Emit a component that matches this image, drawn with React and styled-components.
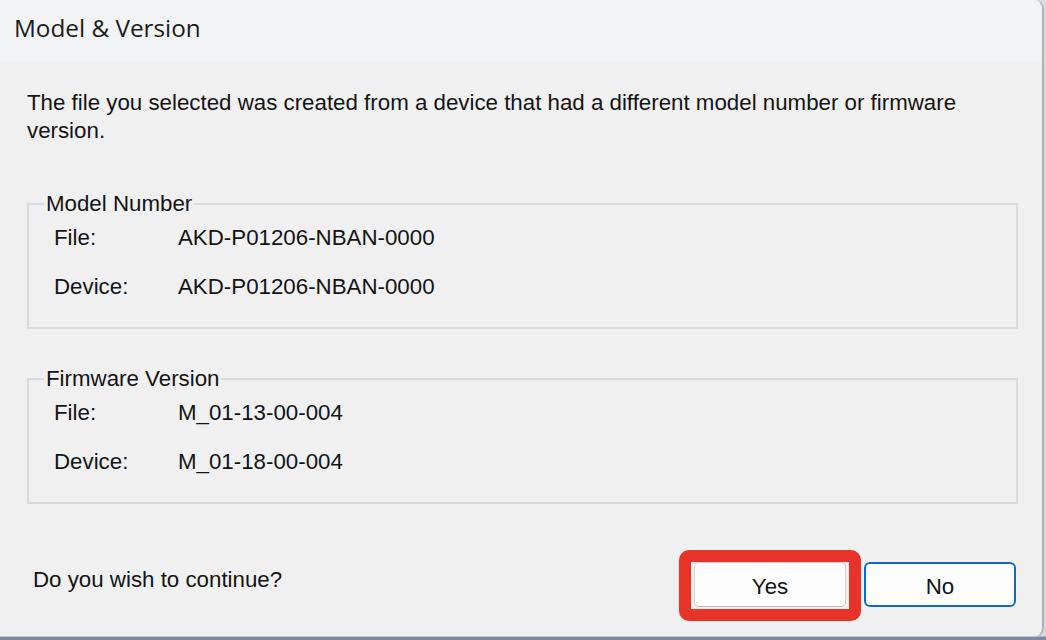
import React from "react";
import styled, { createGlobalStyle } from "styled-components";

const Global = createGlobalStyle`
  html, body { margin: 0; padding: 0; }
  body {
    width: 1046px;
    height: 640px;
    overflow: hidden;
    background: #d9dbe0;
    font-family: "Liberation Sans", Arial, sans-serif;
  }
  #root { width: 1046px; height: 640px; }
`;

const Screen = styled.div`
  width: 1046px;
  height: 640px;
  display: flex;
  flex-direction: column;
  background: linear-gradient(#d9dbe0 0, #d9dbe0 636px, #7d88a2 637px);
`;

const Window = styled.div`
  width: 1042px;
  height: 636px;
  box-sizing: content-box;
  border-right: 2px solid #b2b2b4;
  border-bottom: 1px solid #c4c6cc;
  border-radius: 0 9px 9px 0;
  overflow: hidden;
  display: flex;
  flex-direction: column;
  background: #f0f0f0;
`;

const TitleBar = styled.div`
  height: 62px;
  flex: none;
  display: flex;
  align-items: center;
  padding: 0 0 8px 14px;
  box-sizing: border-box;
  background: #f2f3f5;
  font-family: "Open Sans", "Noto Sans", sans-serif;
  font-size: 24.3px;
  color: #1b1b1b;
`;

const Body = styled.div`
  flex: 1;
  display: flex;
  flex-direction: column;
  padding: 27px 24px 0 27px;
  font-size: 22.3px;
  color: #141414;
`;

const Message = styled.p`
  margin: 0;
  line-height: 28px;
  width: 970px;
`;

const GroupBox = styled.fieldset`
  margin: ${(p) => p.$top}px 0 0 0;
  padding: 12px 0 29px 0;
  border: 2px solid #dadada;
  min-width: 0;
  display: flex;
  flex-direction: column;
  gap: 27px;
`;

const Legend = styled.legend`
  margin-left: 15px;
  padding: 0 2px;
  line-height: 22px;
  color: #141414;
`;

const Row = styled.div`
  display: grid;
  grid-template-columns: 124px 1fr;
  padding-left: 25px;
  line-height: 22px;
`;

const Footer = styled.div`
  margin-top: 58px;
  display: flex;
  align-items: center;
  padding: 0 2px 0 6px;
`;

const Question = styled.span`
  flex: 1;
  line-height: 22px;
  margin-top: -10px;
`;

const Buttons = styled.div`
  display: flex;
  gap: 18px;
`;

const ButtonWrap = styled.div`
  position: relative;
`;

const Button = styled.button`
  width: 152px;
  height: 45px;
  box-sizing: border-box;
  font-family: "Liberation Sans", Arial, sans-serif;
  font-size: 22.3px;
  color: #141414;
  background: #fdfdfd;
  border: ${(p) => (p.$default ? "2px solid #0a6ccc" : "1px solid #d2d2d2")};
  border-bottom-color: ${(p) => (p.$default ? "#0a6ccc" : "#bdbdbd")};
  border-radius: ${(p) => (p.$default ? "6px" : "5px")};
  padding: 4px 0 0;
  display: flex;
  align-items: center;
  justify-content: center;
`;

const Highlight = styled.div`
  position: absolute;
  top: -12px;
  left: -15px;
  right: -15px;
  bottom: -14px;
  border: 12px solid #e7332a;
  border-radius: 10px;
  pointer-events: none;
`;

function Group({ title, top, rows }) {
  return (
    <GroupBox $top={top}>
      <Legend>{title}</Legend>
      {rows.map(([k, v]) => (
        <Row key={k}>
          <span>{k}</span>
          <span>{v}</span>
        </Row>
      ))}
    </GroupBox>
  );
}

export default function App() {
  return (
    <>
      <Global />
      <Screen>
        <Window>
          <TitleBar>Model &amp; Version</TitleBar>
          <Body>
            <Message>
              The file you selected was created from a device that had a different model number or firmware
              version.
            </Message>
            <Group
              title="Model Number"
              top={48}
              rows={[
                ["File:", "AKD-P01206-NBAN-0000"],
                ["Device:", "AKD-P01206-NBAN-0000"],
              ]}
            />
            <Group
              title="Firmware Version"
              top={39}
              rows={[
                ["File:", "M_01-13-00-004"],
                ["Device:", "M_01-18-00-004"],
              ]}
            />
            <Footer>
              <Question>Do you wish to continue?</Question>
              <Buttons>
                <ButtonWrap>
                  <Button>Yes</Button>
                  <Highlight />
                </ButtonWrap>
                <Button $default>No</Button>
              </Buttons>
            </Footer>
          </Body>
        </Window>
      </Screen>
    </>
  );
}
